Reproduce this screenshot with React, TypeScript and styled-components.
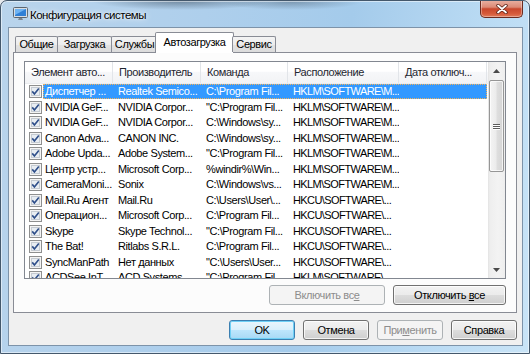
import React from "react";
import styled, { createGlobalStyle, css } from "styled-components";

type Entry = { name: string; maker: string; cmd: string; place: string };

const entries: Entry[] = [
  { name: "Диспетчер ...", maker: "Realtek Semico...", cmd: "C:\\Program Fil...", place: "HKLM\\SOFTWARE\\M..." },
  { name: "NVIDIA GeF...", maker: "NVIDIA Corpor...", cmd: "\"C:\\Program Fil...", place: "HKLM\\SOFTWARE\\M..." },
  { name: "NVIDIA GeF...", maker: "NVIDIA Corpor...", cmd: "C:\\Windows\\sy...", place: "HKLM\\SOFTWARE\\M..." },
  { name: "Canon Adva...", maker: "CANON INC.", cmd: "C:\\Windows\\sy...", place: "HKLM\\SOFTWARE\\M..." },
  { name: "Adobe Upda...", maker: "Adobe System...", cmd: "\"C:\\Program Fil...", place: "HKLM\\SOFTWARE\\M..." },
  { name: "Центр устр...", maker: "Microsoft Corp...", cmd: "%windir%\\Win...", place: "HKLM\\SOFTWARE\\M..." },
  { name: "CameraMoni...", maker: "Sonix", cmd: "C:\\Windows\\vs...", place: "HKLM\\SOFTWARE\\M..." },
  { name: "Mail.Ru Агент", maker: "Mail.Ru", cmd: "C:\\Users\\User\\...", place: "HKCU\\SOFTWARE\\..." },
  { name: "Операцион...", maker: "Microsoft Corp...", cmd: "C:\\Program Fil...", place: "HKCU\\SOFTWARE\\..." },
  { name: "Skype", maker: "Skype Technol...", cmd: "\"C:\\Program Fil...", place: "HKCU\\SOFTWARE\\..." },
  { name: "The Bat!", maker: "Ritlabs S.R.L.", cmd: "C:\\Program Fil...", place: "HKCU\\SOFTWARE\\..." },
  { name: "SyncManPath", maker: "Нет данных", cmd: "\"C:\\Users\\User...", place: "HKCU\\SOFTWARE\\..." },
  { name: "ACDSee InT...", maker: "ACD Systems", cmd: "\"C:\\Program Fil...", place: "HKLM\\SOFTWARE\\..." },
];

// column widths of the list view (px)
const COL = { name: 88, maker: 88, cmd: 87, place: 111, date: 88 };

const GlobalStyle = createGlobalStyle`
  html, body {
    margin: 0;
    padding: 0;
    background: #e6e9ed;
  }
  body {
    font-family: "Liberation Sans", Arial, sans-serif;
    font-size: 11px;
    letter-spacing: -0.4px;
    color: #000;
  }
  #root {
    width: 530px;
    height: 354px;
    overflow: hidden;
  }
`;

const Window = styled.div`
  box-sizing: border-box;
  width: 530px;
  height: 354px;
  display: flex;
  flex-direction: column;
  border: 1px solid #44586c;
  border-radius: 7px 7px 0 0;
  overflow: hidden;
  background:
    radial-gradient(ellipse 90px 9px at 180px 0px, rgba(60, 78, 96, 0.55), transparent),
    radial-gradient(ellipse 70px 8px at 290px 1px, rgba(60, 78, 96, 0.4), transparent),
    linear-gradient(100deg, #b9d4ec 0%, #aecfec 35%, #a4cbeb 60%, #bcdcf4 85%, #c9e4f7 100%);
  box-shadow: inset 0 0 0 1px rgba(255, 255, 255, 0.5);
`;

const TitleBar = styled.div`
  height: 26px;
  flex: none;
  display: flex;
  align-items: center;
  padding-left: 12px;
  gap: 2px;
`;

const Title = styled.span`
  font-size: 11.5px;
  letter-spacing: -0.5px;
  color: #000;
  text-shadow: 0 0 6px rgba(255, 255, 255, 0.95), 0 0 2px rgba(255, 255, 255, 0.9);
  margin-top: 1px;
`;

const CloseButton = styled.div`
  box-sizing: border-box;
  width: 43px;
  height: 18px;
  margin: -1px 6px 0 auto;
  align-self: flex-start;
  border: 1px solid #6b2b20;
  border-top: none;
  border-radius: 0 0 5px 5px;
  background: linear-gradient(#eab2a4 0%, #dc8a76 42%, #c9472d 52%, #d65a3a 80%, #e07a5a 100%);
  box-shadow: inset 0 0 0 1px rgba(255, 255, 255, 0.35);
  display: flex;
  align-items: center;
  justify-content: center;
`;

const Client = styled.div`
  flex: 1;
  display: flex;
  flex-direction: column;
  margin: 0 6px 7px 7px;
  padding: 4px 5px 5px 4px;
  border: 1px solid #7d93a9;
  background: #f0f0f0;
  min-height: 0;
`;

const TabStrip = styled.div`
  height: 20px;
  flex: none;
  display: flex;
  align-items: flex-end;
  padding-left: 2px;
  position: relative;
  z-index: 2;
`;

const Tab = styled.div<{ $w: number; $active?: boolean }>`
  box-sizing: border-box;
  width: ${(p) => p.$w}px;
  height: 16px;
  margin-right: -1px;
  border: 1px solid #898c95;
  border-bottom: none;
  border-radius: 2px 2px 0 0;
  background: linear-gradient(#f4f4f4 0%, #ececec 50%, #e2e2e2 51%, #dcdcdc 100%);
  text-align: center;
  line-height: 15px;
  white-space: nowrap;
  ${(p) =>
    p.$active &&
    css`
      height: 21px;
      margin: 0 -2px -1px -2px;
      background: #fff;
      line-height: 18px;
    `}
`;

const TabPanel = styled.div`
  flex: 1;
  min-height: 0;
  display: flex;
  flex-direction: column;
  padding: 8px 10px 7px 10px;
  border: 1px solid #898c95;
  background: #fcfcfc;
`;

const ListView = styled.div`
  flex: 1;
  min-height: 0;
  display: flex;
  border: 1px solid #828790;
  background: #fff;
  overflow: hidden;
`;

const ListMain = styled.div`
  flex: 1;
  display: flex;
  flex-direction: column;
  overflow: hidden;
`;

const Header = styled.div`
  height: 22px;
  flex: none;
  display: flex;
  box-sizing: border-box;
  border-bottom: 1px solid #eaecef;
  background: linear-gradient(#ffffff 0%, #ffffff 45%, #f7f8fa 46%, #f2f3f5 100%);
  color: #1e2630;
`;

const HeaderCell = styled.div<{ $w: number }>`
  box-sizing: border-box;
  width: ${(p) => p.$w}px;
  flex: none;
  padding-left: 6px;
  border-right: 1px solid #e2e5e9;
  line-height: 21px;
  white-space: nowrap;
  overflow: hidden;
`;

const Row = styled.div`
  height: 15.5px;
  flex: none;
  display: flex;
  align-items: center;
`;

const CheckSlot = styled.div`
  width: 18px;
  flex: none;
  display: flex;
  align-items: center;
  padding-left: 4px;
  box-sizing: border-box;
`;

const RowBody = styled.div<{ $selected?: boolean }>`
  display: flex;
  height: 15px;
  align-items: center;
  ${(p) =>
    p.$selected &&
    css`
      background: #3399ff;
      color: #fff;
      outline: 1px dotted #f3b25a;
      outline-offset: -1px;
    `}
`;

const Cell = styled.div<{ $w: number; $pad?: number; $tight?: boolean }>`
  box-sizing: border-box;
  width: ${(p) => p.$w}px;
  flex: none;
  padding-left: ${(p) => p.$pad ?? 5}px;
  line-height: 15px;
  white-space: nowrap;
  overflow: hidden;
  ${(p) => p.$tight && "letter-spacing: -0.6px;"}
`;

const Scrollbar = styled.div`
  width: 17px;
  flex: none;
  display: flex;
  flex-direction: column;
  background: linear-gradient(90deg, #e3e3e3 0, #eeeeee 2px, #f3f3f3 60%, #eeeeee 100%);
`;

const ScrollArrow = styled.div`
  height: 17px;
  flex: none;
  display: flex;
  align-items: center;
  justify-content: center;
`;

const ScrollTrack = styled.div`
  flex: 1;
  padding: 1px 0 0 1px;
`;

const Thumb = styled.div`
  box-sizing: border-box;
  width: 15px;
  height: 92px;
  border: 1px solid #969696;
  border-radius: 2px;
  background: linear-gradient(90deg, #f4f4f4 0%, #ececec 45%, #dedede 55%, #d5d5d5 100%);
  box-shadow: inset 0 0 0 1px rgba(255, 255, 255, 0.7);
  display: flex;
  flex-direction: column;
  align-items: center;
  justify-content: center;
  gap: 1px;
`;

const Grip = styled.div`
  width: 7px;
  height: 1px;
  background: #5c5c5c;
  box-shadow: 0 1px 0 #fff;
`;

const ButtonRow = styled.div`
  flex: none;
  display: flex;
  justify-content: flex-end;
  gap: 8px;
  margin-top: 6px;
`;

const Footer = styled.div`
  flex: none;
  display: flex;
  justify-content: flex-end;
  gap: 8px;
  margin-top: 7px;
`;

const Button = styled.div<{ $w: number; $kind?: "default" | "disabled" }>`
  box-sizing: border-box;
  width: ${(p) => p.$w}px;
  height: 20px;
  border: 1px solid #707070;
  border-radius: 3px;
  background: linear-gradient(#f2f2f2 0%, #ebebeb 49%, #dddddd 50%, #cfcfcf 100%);
  box-shadow: inset 0 0 0 1px rgba(255, 255, 255, 0.75);
  text-align: center;
  line-height: 18px;
  white-space: nowrap;
  color: #000;
  ${(p) =>
    p.$kind === "default" &&
    css`
      border-color: #3c7fb1;
      background: linear-gradient(#eaf6fd 0%, #d9f0fc 49%, #bee6fd 50%, #a7d9f5 100%);
      box-shadow: inset 0 0 0 1px #6fd0f6;
    `}
  ${(p) =>
    p.$kind === "disabled" &&
    css`
      border-color: #adb2b5;
      background: #f4f4f4;
      box-shadow: none;
      color: #8d8d8d;
    `}
`;

const Key = styled.span`
  text-decoration: underline;
`;

const AppIcon = () => (
  <svg width="15" height="14" viewBox="0 0 15 14">
    <rect x="0.5" y="0.5" width="14" height="10" rx="1" fill="#d9dde2" stroke="#5b6570" />
    <rect x="2" y="2" width="11" height="7" fill="#2f7fd6" />
    <path d="M2 2 L13 2 L2 8 Z" fill="#6fb3f2" />
    <path d="M6 11 L9 11 L10 13 L5 13 Z" fill="#7b858f" />
  </svg>
);

const CloseGlyph = () => (
  <svg width="12" height="10" viewBox="0 0 12 10">
    <path d="M2 1.5 L10 8.5 M10 1.5 L2 8.5" stroke="#5a1f14" strokeWidth="3.4" strokeLinecap="round" />
    <path d="M2 1.5 L10 8.5 M10 1.5 L2 8.5" stroke="#fff" strokeWidth="1.8" strokeLinecap="round" />
  </svg>
);

const CheckBox = () => (
  <svg width="13" height="13" viewBox="0 0 13 13">
    <rect x="0.5" y="0.5" width="12" height="12" fill="#f4f4f4" stroke="#8e8f8f" />
    <rect x="2.5" y="2.5" width="8" height="8" fill="#e8edf2" stroke="#c5cbd2" />
    <path d="M3.2 6.4 L5.4 8.9 L9.8 3.4" fill="none" stroke="#2f4f8a" strokeWidth="1.6" />
  </svg>
);

const Arrow = ({ up }: { up?: boolean }) => (
  <svg width="7" height="4" viewBox="0 0 7 4">
    <path d={up ? "M0 4 L3.5 0 L7 4 Z" : "M0 0 L3.5 4 L7 0 Z"} fill="#4a4a4a" />
  </svg>
);

const App = () => {
  return (
    <>
      <GlobalStyle />
      <Window>
        <TitleBar>
          <AppIcon />
          <Title>Конфигурация системы</Title>
          <CloseButton>
            <CloseGlyph />
          </CloseButton>
        </TitleBar>
        <Client>
          <TabStrip>
            <Tab $w={43}>Общие</Tab>
            <Tab $w={55}>Загрузка</Tab>
            <Tab $w={47}>Службы</Tab>
            <Tab $w={79} $active>Автозагрузка</Tab>
            <Tab $w={44}>Сервис</Tab>
          </TabStrip>
          <TabPanel>
            <ListView>
              <ListMain>
                <Header>
                  <HeaderCell $w={COL.name}>Элемент авто...</HeaderCell>
                  <HeaderCell $w={COL.maker}>Производитель</HeaderCell>
                  <HeaderCell $w={COL.cmd}>Команда</HeaderCell>
                  <HeaderCell $w={COL.place}>Расположение</HeaderCell>
                  <HeaderCell $w={COL.date}>Дата отключ...</HeaderCell>
                </Header>
                {entries.map((e, i) => (
                  <Row key={i}>
                    <CheckSlot>
                      <CheckBox />
                    </CheckSlot>
                    <RowBody $selected={i === 0}>
                      <Cell $w={COL.name - 18} $pad={2}>{e.name}</Cell>
                      <Cell $w={COL.maker}>{e.maker}</Cell>
                      <Cell $w={COL.cmd}>{e.cmd}</Cell>
                      <Cell $w={COL.place} $tight>{e.place}</Cell>
                      <Cell $w={COL.date}></Cell>
                    </RowBody>
                  </Row>
                ))}
              </ListMain>
              <Scrollbar>
                <ScrollArrow>
                  <Arrow up />
                </ScrollArrow>
                <ScrollTrack>
                  <Thumb>
                    <Grip />
                    <Grip />
                    <Grip />
                  </Thumb>
                </ScrollTrack>
                <ScrollArrow>
                  <Arrow />
                </ScrollArrow>
              </Scrollbar>
            </ListView>
            <ButtonRow>
              <Button $w={116} $kind="disabled">
                Включить вс<Key>е</Key>
              </Button>
              <Button $w={113}>
                Отключить <Key>в</Key>се
              </Button>
            </ButtonRow>
          </TabPanel>
          <Footer>
            <Button $w={66} $kind="default">OK</Button>
            <Button $w={66}>Отмена</Button>
            <Button $w={66} $kind="disabled">
              При<Key>м</Key>енить
            </Button>
            <Button $w={66}>Справка</Button>
          </Footer>
        </Client>
      </Window>
    </>
  );
};

export default App;
